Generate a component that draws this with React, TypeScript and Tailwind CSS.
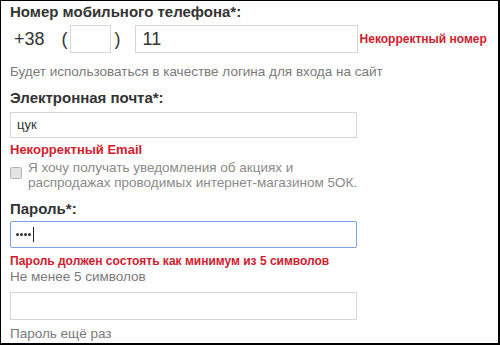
import React from 'react';

const font = "font-['Liberation_Sans',Arial,sans-serif]";

function Dots() {
  return (
    <span className="flex items-center gap-[1px]">
      <span className="w-[3px] h-[3px] rounded-full bg-[#333]" />
      <span className="w-[3px] h-[3px] rounded-full bg-[#333]" />
      <span className="w-[3px] h-[3px] rounded-full bg-[#333]" />
      <span className="w-[3px] h-[3px] rounded-full bg-[#333]" />
    </span>
  );
}

export default function App() {
  return (
    <div
      className={`w-[500px] h-[345px] overflow-hidden bg-white border-black border-t border-l border-r-2 border-b-2 pl-[9px] ${font}`}
    >
      <div className="mt-[2px] text-[15px] leading-[18px] font-bold text-[#333]">
        Номер мобильного телефона*:
      </div>

      <div className="mt-[4px] flex items-center h-[28px] text-[18px] text-[#333]">
        <span className="ml-[4px]">+38</span>
        <span className="ml-[17px]">(</span>
        <div className="ml-[2px] w-[41px] h-[28px] border border-[#d6d6d6] bg-white" />
        <span className="ml-[4px]">)</span>
        <div className="ml-[14px] w-[223px] h-[28px] border border-[#d6d6d6] bg-white flex items-center pl-[7px]">
          11
        </div>
        <span className="ml-[2px] whitespace-nowrap text-[12px] font-bold text-[#d0202e]">
          Некорректный номер
        </span>
      </div>

      <div className="mt-[11px] text-[13.5px] leading-[16px] text-[#7a7a7a]">
        Будет использоваться в качестве логина для входа на сайт
      </div>

      <div className="mt-[9px] text-[15px] leading-[18px] font-bold text-[#333]">
        Электронная почта*:
      </div>
      <div className="mt-[5px] w-[347px] h-[26px] border border-[#d6d6d6] flex items-center pl-[6px] text-[13px] text-[#333]">
        цук
      </div>
      <div className="mt-[4px] text-[13px] leading-[16px] font-bold text-[#d0202e]">
        Некорректный Email
      </div>

      <div className="mt-[2px] flex items-start">
        <div className="mt-[7px] w-[12px] h-[12px] rounded-[2px] border border-[#b5b5b5] bg-[#e4e4e4] shrink-0" />
        <div className="ml-[6px] whitespace-nowrap text-[13.5px] leading-[15px] text-[#8a8a8a]">
          Я хочу получать уведомления об акциях и
          <br />
          распродажах проводимых интернет-магазином 5ОК.
        </div>
      </div>

      <div className="mt-[10px] text-[15px] leading-[18px] font-bold text-[#333]">
        Пароль*:
      </div>
      <div className="mt-[3px] w-[347px] h-[27px] rounded-[2px] border border-[#7fa3dc] flex items-center pl-[5px]">
        <Dots />
        <span className="ml-[2px] w-px h-[15px] bg-[#222]" />
      </div>
      <div className="mt-[5px] text-[12px] leading-[16px] font-bold text-[#d0202e]">
        Пароль должен состоять как минимум из 5 символов
      </div>
      <div className="text-[13.5px] leading-[16px] text-[#7a7a7a]">Не менее 5 символов</div>
      <div className="mt-[7px] w-[347px] h-[28px] border border-[#d6d6d6]" />
      <div className="mt-[6px] text-[13.5px] leading-[16px] text-[#7a7a7a]">Пароль ещё раз</div>
    </div>
  );
}
